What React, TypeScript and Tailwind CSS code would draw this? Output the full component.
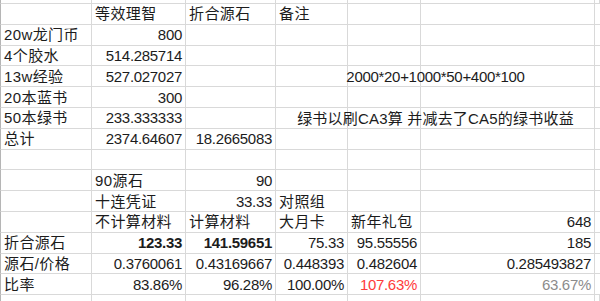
import React from "react";

type Cell = string | { t: string; b?: boolean; c?: string };

const rows: { cells: Cell[]; note?: string; noteTrack?: string }[] = [
  { cells: ["", "等效理智", "折合源石", "备注", "", "", ""] },
  { cells: ["20w龙门币", "800", "", "", "", "", ""] },
  { cells: ["4个胶水", "514.285714", "", "", "", "", ""] },
  { cells: ["13w经验", "527.027027", "", "", "", "", ""], note: "2000*20+1000*50+400*100", noteTrack: "tracking-[-0.3px]" },
  { cells: ["20本蓝书", "300", "", "", "", "", ""] },
  { cells: ["50本绿书", "233.333333", "", "", "", "", ""], note: "绿书以刷CA3算 并减去了CA5的绿书收益", noteTrack: "tracking-[0.2px]" },
  { cells: ["总计", "2374.64607", "18.2665083", "", "", "", ""] },
  { cells: ["", "", "", "", "", "", ""] },
  { cells: ["", "90源石", "90", "", "", "", ""] },
  { cells: ["", "十连凭证", "33.33", "对照组", "", "", ""] },
  { cells: ["", "不计算材料", "计算材料", "大月卡", "新年礼包", "648", ""] },
  { cells: ["折合源石", { t: "123.33", b: true }, { t: "141.59651", b: true }, "75.33", "95.55556", "185", ""] },
  { cells: ["源石/价格", "0.3760061", "0.43169667", "0.448393", "0.482604", "0.285493827", ""] },
  {
    cells: ["比率", "83.86%", "96.28%", "100.00%", { t: "107.63%", c: "text-[#ff3b3b]" }, { t: "63.67%", c: "text-[#8c8c8c]" }, ""],
  },
];

const colStart = ["col-start-1", "col-start-2", "col-start-3", "col-start-4", "col-start-5", "col-start-6", "col-start-7"];
const gridCols = "grid grid-cols-[92px_94px_90px_72px_73px_174px_5px] grid-rows-1";

const isNum = (s: string) => /^[\d.%]+$/.test(s);

function CellView({ cell, col }: { cell: Cell; col: number }) {
  const o = typeof cell === "string" ? { t: cell } : cell;
  const num = isNum(o.t);
  return (
    <div
      className={`${colStart[col]} row-start-1 flex items-center overflow-hidden whitespace-nowrap border-b border-r border-[#d9d9d9] px-[3px] ${
        col === 0 ? "border-l border-l-[#b5b5b5]" : ""
      } ${num ? "justify-end tracking-[-0.3px]" : "justify-start tracking-[0.4px]"} ${o.b ? "font-bold" : ""} ${
        o.c ?? "text-[#1c1c1c]"
      }`}
    >
      {o.t}
    </div>
  );
}

function EmptyRow({ h, bottom }: { h: string; bottom: boolean }) {
  return (
    <div className={`${gridCols} ${h}`}>
      {colStart.map((cs, c) => (
        <div
          key={cs}
          className={`${cs} row-start-1 border-r border-[#d9d9d9] ${bottom ? "border-b" : ""} ${
            c === 0 ? "border-l border-l-[#b5b5b5]" : ""
          }`}
        />
      ))}
    </div>
  );
}

export default function App() {
  return (
    <div className="flex h-[301px] w-[600px] flex-col overflow-hidden bg-white font-['Liberation_Sans','Noto_Sans_CJK_SC',sans-serif] text-[15px] leading-none">
      <EmptyRow h="h-[4px] shrink-0" bottom={true} />
      {rows.map((r, ri) => (
        <div key={ri} className={`${gridCols} h-[20.8px] shrink-0`}>
          {r.cells.map((cell, ci) => (
            <CellView key={ci} cell={cell} col={ci} />
          ))}
          {r.note && (
            <div
              className={`col-start-4 col-span-3 row-start-1 flex items-center justify-center whitespace-nowrap text-[#1c1c1c] ${r.noteTrack}`}
            >
              {r.note}
            </div>
          )}
        </div>
      ))}
      <EmptyRow h="flex-1" bottom={false} />
    </div>
  );
}
